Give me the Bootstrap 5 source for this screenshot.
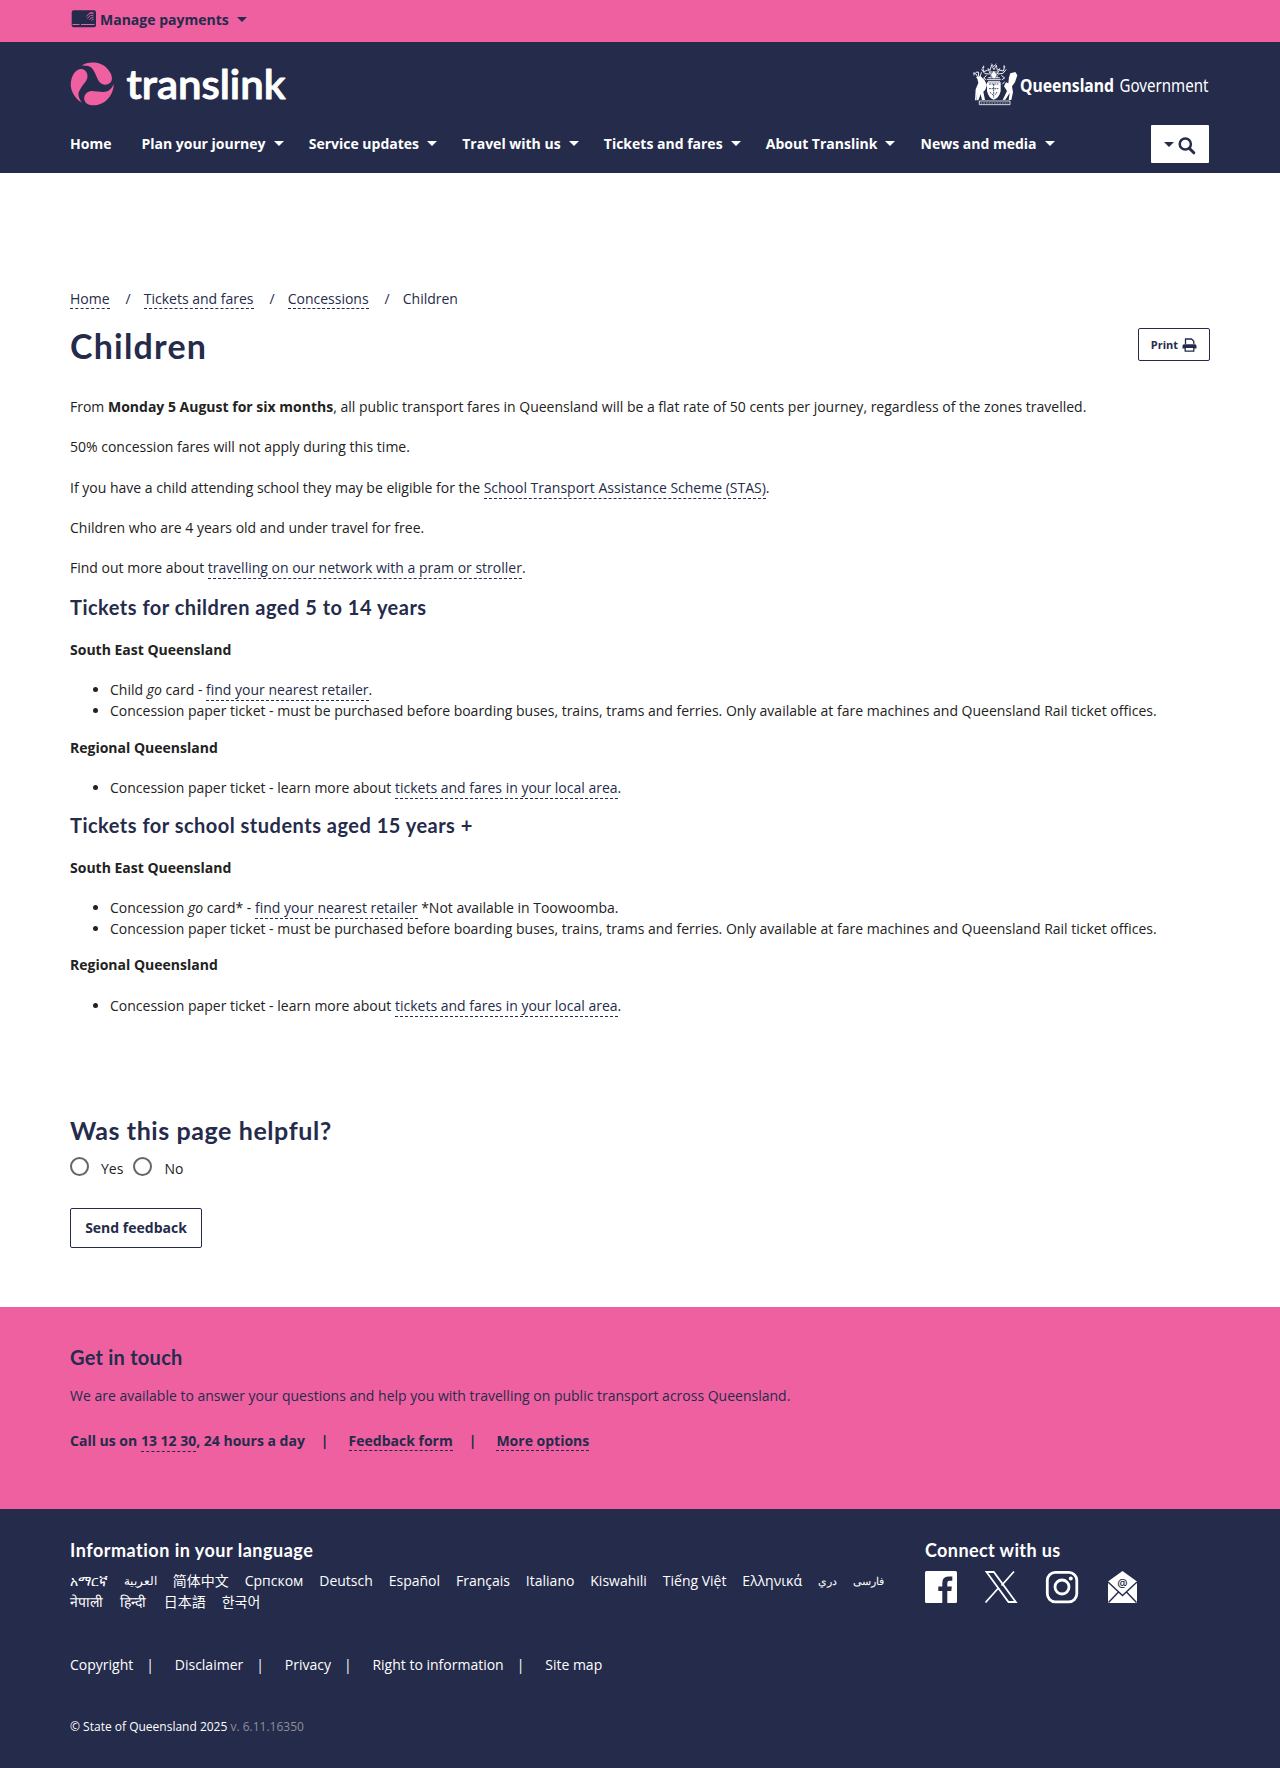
<!DOCTYPE html>
<html lang="en">
<head>
<meta charset="utf-8">
<meta name="viewport" content="width=device-width, initial-scale=1">
<title>Children | Translink</title>
<link href="https://cdn.jsdelivr.net/npm/bootstrap@5.3.0/dist/css/bootstrap.min.css" rel="stylesheet">
<style>
:root{--navy:#252b4b;--pink:#ef60a1}
body{font-family:"Open Sans","Noto Sans CJK SC",sans-serif;font-size:14px;line-height:21px;color:#222;background:#fff}
svg{overflow:visible}
.bg-pink{background:var(--pink);color:var(--navy)}
.bg-navy{background:var(--navy);color:#fff}
.topbar{height:42px}
.masthead{height:131px}
.tri{display:inline-block;border:5px solid transparent;border-top:5.5px solid currentColor;border-bottom:0}
.mainnav{height:38px;gap:30px;font-weight:700;margin-top:12px}
.mainnav .tri{margin:1px -4.85px 0 8px}
.search-btn{width:58px;height:38px;border-radius:1px;color:var(--navy);margin:2px 1px 0 0}
h1,h2,h3,h4{font-family:Lato,sans-serif;font-weight:700;color:var(--navy);margin:0;white-space:nowrap}
h1{font-size:34px;line-height:44px;letter-spacing:1.2px}
h2{font-size:20px;line-height:26px;letter-spacing:.49px}
.dash{color:var(--navy);text-decoration:none;border-bottom:1px dashed var(--navy);padding-bottom:1px}
.crumbs{margin-top:115px;color:var(--navy);height:23px}
.crumbs .dash{height:21px}
.crumbs .sep{margin:0 13px 0 16px}
.title-row{margin-top:13px;height:44px}
.print-btn{width:72px;height:33px;margin-top:4px;border:1px solid var(--navy);border-radius:2px;font-size:11px;font-weight:700;color:var(--navy)}
.copy p{margin:0 0 19.25px}
.copy ul{margin:0 0 15.3px;padding-left:40px}
.copy h2{margin-bottom:19px}
.copy .last-list{margin-bottom:14px}
.copy .sub{font-weight:700}
.helpful{margin-top:99px;height:192px}
.helpful h3{font-size:25px;line-height:30px;letter-spacing:.58px}
.choices{margin-top:12px;height:21px}
.choices .opt{margin:1px 10px 0 12px}
.radio-ring{width:19px;height:19px;border:2px solid #666;border-radius:50%}
.send-btn{width:132px;height:40px;margin-top:30px;border:1px solid var(--navy);border-radius:2px;font-weight:700;color:var(--navy)}
.touch{height:202px}
.touch h2{padding-top:37px;letter-spacing:.25px}
.touch-text{margin-top:15px}
.touch-links{margin-top:24px;height:21px}
.touch-links .dash{height:21px}
.touch-links .bar{margin:0 20px 0 16px}
.foot{height:259px}
.foot h4{color:#fff;font-size:18px;font-weight:700;line-height:24px;letter-spacing:.5px}
.foot .connect h4{letter-spacing:.4px}
.foot-top{padding-top:29px;height:145px}
.langs{width:830px;column-gap:15.900px;margin-top:8px}
.langs .arabic{font-size:12.200px}
.langs .persian{font-size:11px}
.langs .hindi{width:28px;margin-left:1px}
.connect{width:285px}
.socials{margin-top:8px}
.foot-links .bar{margin:0 20.800px 0 13px}
.legal{font-size:12px;margin-top:41px}
.ver{color:#8d8e9a}
</style>
</head>
<body>
<div class="bg-pink topbar">
  <div class="container px-0 d-flex align-items-center h-100 pb-1">
    <svg class="me-1" width="26" height="18" viewBox="0 0 26 18"><rect x="1.7" y=".3" width="24.3" height="17" rx="2" fill="#252b4b"/><path d="M2.500 14.500h7M11 14.500h13.500" stroke="#ef60a1" stroke-width="1"/><g fill="none" stroke="#ef60a1" stroke-width=".9"><path d="M16.500 6.500q3-5 7-2.500M17.500 8.500q2.500-4.500 6-2.500M19.500 9.800q1.500-3.500 4-1.800M21.500 10.500q.7-1.500 2-.8M19.500 3.200q2-1.200 4-.2"/></g></svg>
    <span class="fw-bold">Manage payments</span><span class="tri ms-2"></span>
  </div>
</div>
<header class="bg-navy masthead">
  <div class="container px-0">
    <div class="d-flex justify-content-between pt-3 mb-1">
      <svg width="230" height="54" viewBox="70 58 230 54">
        <g transform="translate(60 0) scale(.33333)" fill="#ef60a1">
          <path id="blade" d="M64 197C85 184 121 183 142 206C155 219 160 237 152 247C143 258 125 257 116 243C107 228 103 203 85 198C77 196 70 196 64 197Z"/>
          <use href="#blade" transform="rotate(120 97 252)"/><use href="#blade" transform="rotate(240 97 252)"/>
        </g>
        <text x="126.500" y="98.800" font-family="Lato" font-weight="600" font-size="39.500" textLength="159" lengthAdjust="spacingAndGlyphs" fill="#fff" stroke="#fff" stroke-width=".9" stroke-linejoin="round">translink</text>
      </svg>
      <svg width="240" height="54" viewBox="970 58 240 54">
        <g transform="translate(940 40) scale(.33333)" fill="#fff">
          <path d="M118 183h92v11h-92z" fill="none" stroke="#fff" stroke-width="2.500"/>
          <path d="M122 189h83" stroke="#fff" stroke-dasharray="5 3" stroke-width="2"/>
          <path d="M108 112l13-4 12 11 8 16-5 14-6 6 5 25h-9l-4-17-7 18h-6l3-22-4 22h-3l2-33 8-19-3-13z"/>
          <path d="M211 100l15-4 6 10-7 21-9 12 3 18-5 23h-8l3-21-13 20-8 1 13-27-9-14 6-12 7 3 2-18z"/>
          <path d="M141 127h41v26q-4 20-21 26-16-6-20-26z"/>
          <path d="M147 132h28M147 146h28M161 132v42M150 157l9 8M171 156l-6 9" stroke="#252b4b" stroke-width="2.500" stroke-dasharray="6 2"/>
          <g fill="none" stroke="#fff" stroke-width="2.800" stroke-linecap="round">
            <path d="M113 111l-5-9-6-3M116 108l-1-12-7 1M120 111l4-13M125 89l10 12 13 1M128 82l3 13 11-4M198 89l-9 11-14 2M194 80l-4 13-10-2M139 107l-8 7 7 5M185 107l9 7-8 5M142 118h39M145 124h34M137 133l-5-6M188 132l5-6M102 99v6M131 78v5M192 77v5"/>
            <path d="M151 102l-7-16 7 5 3-15 8 13 7-13 3 15 8-5-8 16zM152 108h21M155 72l6 8 7-8M150 96h23M146 113h32" stroke-dasharray="7 3"/>
          </g>
          <path d="M153 105l8-12 9 12-8 11z"/>
        </g>
        <text x="1020" y="91.800" font-family="Noto Sans" font-weight="700" font-size="17.700" textLength="94" lengthAdjust="spacingAndGlyphs" fill="#fff">Queensland</text>
        <text x="1119.500" y="91.800" font-family="Noto Sans" font-weight="400" font-size="17.700" textLength="89" lengthAdjust="spacingAndGlyphs" fill="#fff">Government</text>
      </svg>
    </div>
    <nav class="d-flex align-items-center mainnav">
      <span>Home</span>
      <span class="d-flex align-items-center">Plan your journey<i class="tri"></i></span>
      <span class="d-flex align-items-center">Service updates<i class="tri"></i></span>
      <span class="d-flex align-items-center">Travel with us<i class="tri"></i></span>
      <span class="d-flex align-items-center">Tickets and fares<i class="tri"></i></span>
      <span class="d-flex align-items-center">About Translink<i class="tri"></i></span>
      <span class="d-flex align-items-center">News and media<i class="tri"></i></span>
      <span class="search-btn bg-white ms-auto d-flex align-items-center justify-content-center"><b class="tri m-0 me-1"></b><svg width="18" height="18" viewBox="0 0 18 18" class="mt-1"><circle cx="7.300" cy="7" r="5.600" fill="none" stroke="#252b4b" stroke-width="2.500"/><path d="M11.500 11.500l4.300 4.300" stroke="#252b4b" stroke-width="3" stroke-linecap="round"/></svg></span>
    </nav>
  </div>
</header>
<main class="container px-0">
  <div class="crumbs d-flex">
    <a class="dash">Home</a><span class="sep">/</span><a class="dash">Tickets and fares</a><span class="sep">/</span><a class="dash">Concessions</a><span class="sep">/</span><span>Children</span>
  </div>
  <div class="title-row d-flex justify-content-between align-items-start">
    <h1>Children</h1>
    <span class="print-btn d-flex align-items-center justify-content-center">Print<svg class="ms-1" width="15" height="14" viewBox="0 0 15 14"><path d="M3.500 6V1h6l2.300 2.300V6" fill="#fff" stroke="#252b4b" stroke-width="1.300"/><path d="M.5 10.500V8Q.5 6.300 2.200 6.300h10.600q1.700 0 1.700 1.700v2.500z" fill="#252b4b"/><path d="M3.200 9.300h8.600v3.900H3.200z" fill="#fff" stroke="#252b4b" stroke-width="1.300"/></svg></span>
  </div>
  <div class="copy">
    <p class="mt-4 pt-1">From <b>Monday 5 August for six months</b>, all public transport fares in Queensland will be a flat rate of 50 cents per journey, regardless of the zones travelled.</p>
    <p>50% concession fares will not apply during this time.</p>
    <p>If you have a child attending school they may be eligible for the <a class="dash">School Transport Assistance Scheme (STAS)</a>.</p>
    <p>Children who are 4 years old and under travel for free.</p>
    <p class="mb-3">Find out more about <a class="dash">travelling on our network with a pram or stroller</a>.</p>
    <h2>Tickets for children aged 5 to 14 years</h2>
    <p class="sub">South East Queensland</p>
    <ul><li>Child <i>go</i> card - <a class="dash">find your nearest retailer</a>.</li><li>Concession paper ticket - must be purchased before boarding buses, trains, trams and ferries. Only available at fare machines and Queensland Rail ticket offices.</li></ul>
    <p class="sub">Regional Queensland</p>
    <ul class="last-list"><li>Concession paper ticket - learn more about <a class="dash">tickets and fares in your local area</a>.</li></ul>
    <h2>Tickets for school students aged 15 years +</h2>
    <p class="sub">South East Queensland</p>
    <ul><li>Concession <i>go</i> card* - <a class="dash">find your nearest retailer</a> *Not available in Toowoomba.</li><li>Concession paper ticket - must be purchased before boarding buses, trains, trams and ferries. Only available at fare machines and Queensland Rail ticket offices.</li></ul>
    <p class="sub">Regional Queensland</p>
    <ul class="mb-0"><li>Concession paper ticket - learn more about <a class="dash">tickets and fares in your local area</a>.</li></ul>
  </div>
  <section class="helpful">
    <h3>Was this page helpful?</h3>
    <div class="d-flex choices"><span class="radio-ring"></span><span class="opt">Yes</span><span class="radio-ring"></span><span class="opt">No</span></div>
    <span class="send-btn d-flex align-items-center justify-content-center">Send feedback</span>
  </section>
</main>
<section class="bg-pink touch">
  <div class="container px-0">
    <h2>Get in touch</h2>
    <div class="touch-text">We are available to answer your questions and help you with travelling on public transport across Queensland.</div>
    <div class="touch-links d-flex fw-bold"><span>Call us on <a class="dash">13 12 30</a>, 24 hours a day</span><span class="bar">|</span><a class="dash">Feedback form</a><span class="bar">|</span><a class="dash">More options</a></div>
  </div>
</section>
<footer class="bg-navy foot">
  <div class="container px-0">
    <div class="foot-top d-flex justify-content-between">
      <div><h4>Information in your language</h4>
        <div class="langs d-flex flex-wrap"><span>አማርኛ</span><span class="arabic">العربية</span><span>简体中文</span><span>Српском</span><span>Deutsch</span><span>Español</span><span>Français</span><span>Italiano</span><span>Kiswahili</span><span>Tiếng Việt</span><span>Ελληνικά</span><span class="persian">دري</span><span class="persian">فارسی</span><span>नेपाली</span><span class="hindi">हिन्दी</span><span>日本語</span><span>한국어</span></div>
      </div>
      <div class="connect"><h4>Connect with us</h4>
        <svg class="socials" width="213" height="34" viewBox="0 0 213 34" fill="none">
          <rect y="1" width="32" height="32" rx="1.500" fill="#fff"/><path d="M17.300 33V21h-4v-4.500h4V13q0-6.500 6-6.500h4v4.300h-2.700q-2.300 0-2.300 2.400v3.300h4.500l-.5 4.500h-4v12z" fill="#252b4b"/>
          <path d="M61.500 2h7.300l22 30h-7.300zM89 1.500L76.500 15.500M73 18.500L60.500 32.500" stroke="#fff" stroke-width="1.800"/>
          <rect x="122.300" y="2.300" width="29.500" height="29.500" rx="8" stroke="#fff" stroke-width="2.800"/><circle cx="137" cy="17" r="7" stroke="#fff" stroke-width="2.800"/><circle cx="145.800" cy="8.600" r="2" fill="#fff"/>
          <path d="M183 11.500L197.500 1 212 11.500V33h-29z" fill="#fff"/><path d="M183 12l14.500 13.500L212 12M183.500 32.500L193.500 22M211.500 32.500L201.500 22" stroke="#252b4b" stroke-width="1.400"/>
          <text x="197.500" y="17" text-anchor="middle" font-family="Open Sans" font-weight="600" font-size="11.500" fill="#252b4b">@</text>
        </svg>
      </div>
    </div>
    <div class="foot-links d-flex"><span>Copyright</span><span class="bar">|</span><span>Disclaimer</span><span class="bar">|</span><span>Privacy</span><span class="bar">|</span><span>Right to information</span><span class="bar">|</span><span>Site map</span></div>
    <div class="legal">© State of Queensland 2025 <span class="ver">v. 6.11.16350</span></div>
  </div>
</footer>
<script src="https://cdn.jsdelivr.net/npm/bootstrap@5.3.0/dist/js/bootstrap.bundle.min.js"></script>
</body>
</html>
